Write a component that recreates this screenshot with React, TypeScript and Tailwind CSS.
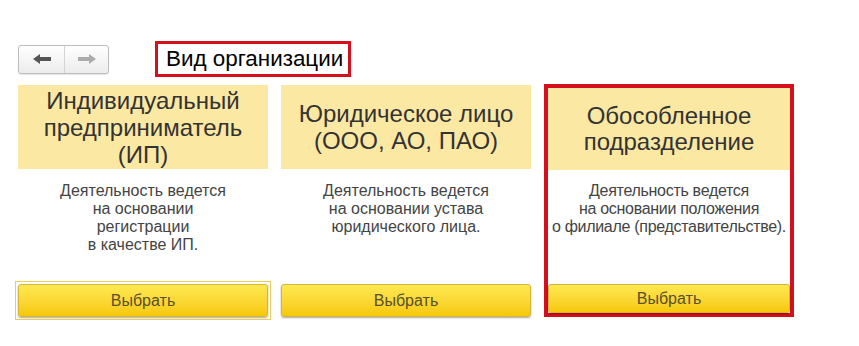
import React from "react";

type Kind = {
  title: string[];
  text: string[];
  focused?: boolean;
  selected?: boolean;
};

const kinds: Kind[] = [
  {
    title: ["Индивидуальный", "предприниматель", "(ИП)"],
    text: ["Деятельность ведется", "на основании", "регистрации", "в качестве ИП."],
    focused: true,
  },
  {
    title: ["Юридическое лицо", "(ООО, АО, ПАО)"],
    text: ["Деятельность ведется", "на основании устава", "юридического лица."],
  },
  {
    title: ["Обособленное", "подразделение"],
    text: ["Деятельность ведется", "на основании положения", "о филиале (представительстве)."],
    selected: true,
  },
];

function ArrowLeft({ color }: { color: string }) {
  return (
    <svg width="18" height="10" viewBox="0 0 18 10">
      <path d="M0 5 L7 0 L7 3 L18 3 L18 7 L7 7 L7 10 Z" fill={color} />
    </svg>
  );
}

function ArrowRight({ color }: { color: string }) {
  return (
    <svg width="18" height="10" viewBox="0 0 18 10">
      <path d="M18 5 L11 0 L11 3 L0 3 L0 7 L11 7 L11 10 Z" fill={color} />
    </svg>
  );
}

function Card({ kind }: { kind: Kind }) {
  const button = (
    <button
      className={
        "w-full flex items-center justify-center rounded-[3px] border border-[#d2b53a] bg-gradient-to-b from-[#ffe94f] to-[#f6c800] text-[16px] text-[#575033] shadow-[0_1px_2px_rgba(0,0,0,0.35)] " +
        (kind.selected ? "h-[29px]" : "h-[33px]")
      }
    >
      Выбрать
    </button>
  );

  if (kind.selected) {
    return (
      <div className="w-[250px] h-[233px] border-4 border-[#d5101c] flex flex-col">
        <div className="h-[82px] bg-[#fbe8a3] flex flex-col items-center justify-center text-[24px] leading-[26px] text-[#333333]">
          {kind.title.map((l) => (
            <span key={l}>{l}</span>
          ))}
        </div>
        <div className="flex-1 flex flex-col items-center pt-[12px] text-[16px] leading-[18px] tracking-[-0.3px] whitespace-nowrap text-[#444444]">
          {kind.text.map((l) => (
            <span key={l}>{l}</span>
          ))}
        </div>
        {button}
      </div>
    );
  }

  return (
    <div className="w-[250px] h-[232px] mt-px flex flex-col">
      <div className="h-[84px] bg-[#fbe8a3] flex flex-col items-center justify-center text-[24px] leading-[27px] text-[#333333]">
        {kind.title.map((l) => (
          <span key={l}>{l}</span>
        ))}
      </div>
      <div className="flex-1 flex flex-col items-center pt-[13px] text-[16px] leading-[18px] whitespace-nowrap text-[#444444]">
        {kind.text.map((l) => (
          <span key={l}>{l}</span>
        ))}
      </div>
      <div className={kind.focused ? "outline outline-1 outline-offset-2 outline-[#eccd55]" : ""}>{button}</div>
    </div>
  );
}

export default function App() {
  return (
    <div className="w-[859px] h-[346px] bg-white pt-[41px] pl-[18px] font-['Liberation_Sans',Arial,sans-serif]">
      <div className="flex items-center h-[36px]">
        <div className="flex h-[29px] w-[91px] rounded-[3px] border border-[#bdbdbd] bg-gradient-to-b from-white to-[#ececec] shadow-[0_1px_1px_rgba(0,0,0,0.1)]">
          <div className="w-[46px] flex items-center justify-center border-r border-[#d4d4d4]">
            <ArrowLeft color="#555555" />
          </div>
          <div className="flex-1 flex items-center justify-center">
            <ArrowRight color="#ababab" />
          </div>
        </div>
        <div className="ml-[46px] h-[36px] w-[196px] border-[3px] border-[#d5101c] flex items-center pl-[8px] text-[22.4px] text-black">
          Вид организации
        </div>
      </div>
      <div className="flex items-start gap-[13px] mt-[7px]">
        {kinds.map((k) => (
          <Card key={k.title[0]} kind={k} />
        ))}
      </div>
    </div>
  );
}
